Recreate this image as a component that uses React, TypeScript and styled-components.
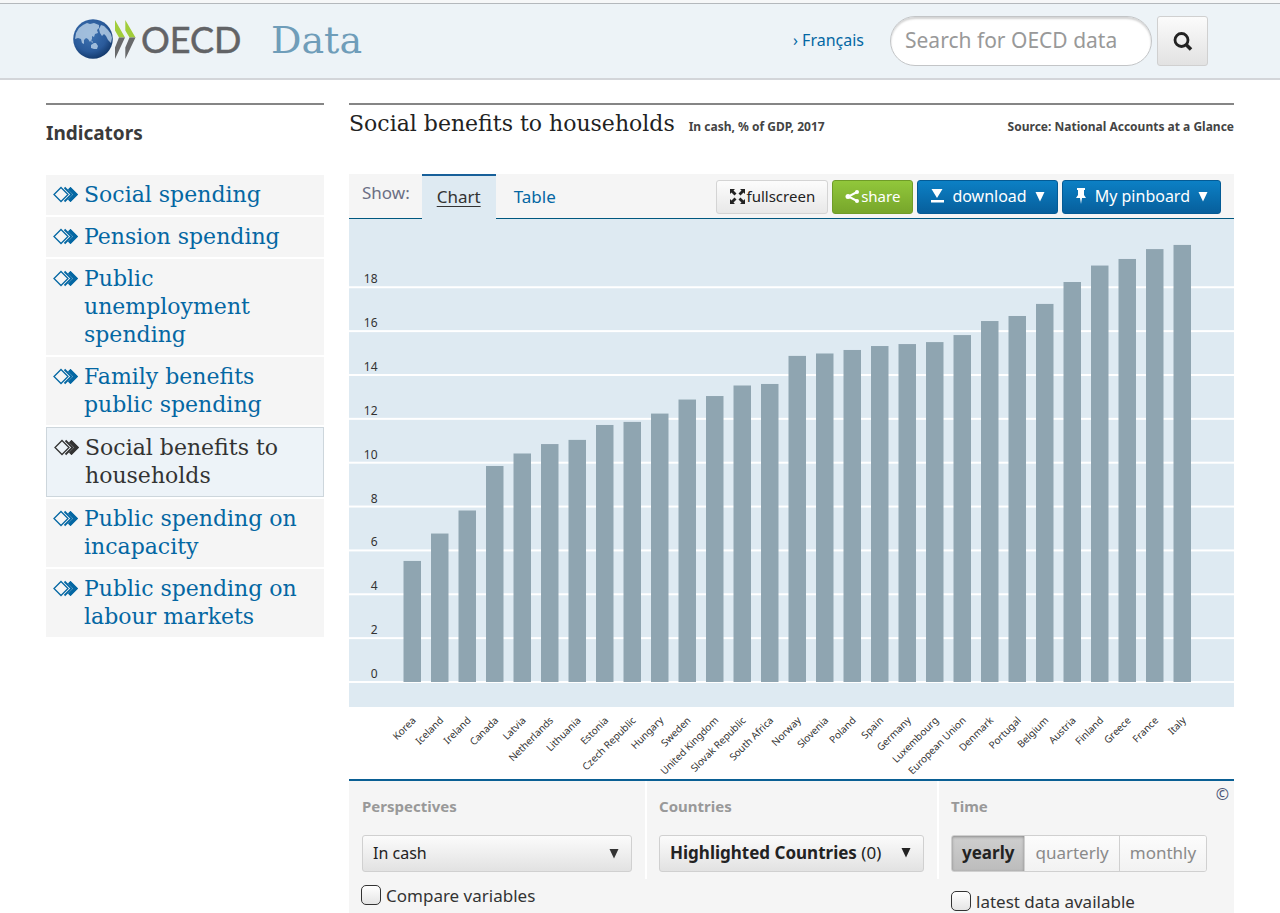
import React from "react";
import styled, { createGlobalStyle, css } from "styled-components";

const sans = `"Noto Sans", "Open Sans", sans-serif`;
const slab = `"DejaVu Serif", serif`;

const blue = "#0467a3";
const paleBlue = "#deeaf2";
const panelGrey = "#f5f5f5";

const GlobalStyle = createGlobalStyle`
  *, *::before, *::after { box-sizing: border-box; }
  body { margin: 0; background: #fff; color: #333; font-family: ${sans}; }
  h1, h2, h3, ul, p { margin: 0; padding: 0; }
  ul { list-style: none; }
  button, input, select { font-family: inherit; margin: 0; }
  a { color: ${blue}; text-decoration: none; }
`;

const Page = styled.div`
  min-height: 100vh;
  display: flex;
  flex-direction: column;
`;

const Header = styled.header`
  border-top: 3px solid #f6f7f8;
  border-bottom: 2px solid #d3d5d9;
  background: #edf3f7;
`;

const HeaderBar = styled.div`
  display: flex;
  align-items: center;
  height: 75px;
  padding: 0 72px;
  border-top: 1px solid #b4b8bc;
`;

const Brand = styled.a`
  display: flex;
  align-items: center;
  svg { display: block; }
`;

const SiteName = styled.span`
  margin-left: 27px;
  padding-bottom: 2px;
  font: 38px/48px ${slab};
  color: #6f9db9;
`;

const Language = styled.a`
  margin-left: auto;
  margin-right: 26px;
  padding-bottom: 2px;
  font-size: 16px;
  line-height: 24px;
`;

const Search = styled.form`
  display: flex;
  gap: 5px;
`;

const SearchInput = styled.input`
  width: 262px;
  height: 50px;
  padding: 0 14px 2px;
  border: 1px solid #c3c5c7;
  border-radius: 25px;
  box-shadow: inset 0 2px 2px #d4d4d4;
  background: #fff;
  font-size: 21px;
  &::placeholder { color: #999; opacity: 1; }
`;

const greyButton = css`
  border: 1px solid #d0d0d0;
  border-radius: 3px;
  background: linear-gradient(#fbfbfb, #e2e2e2);
  color: #222;
`;

const SearchButton = styled.button`
  ${greyButton}
  display: grid;
  place-items: center;
  width: 51px;
  height: 50px;
  padding: 0;
`;

const Body = styled.div`
  flex: 1;
  display: grid;
  grid-template-columns: 278px minmax(0, 1fr);
  gap: 25px;
  padding: 23px 46px 0;
`;

const Sidebar = styled.aside`
  border-top: 2px solid #858585;
`;

const SidebarTitle = styled.h2`
  padding: 14px 0 28px;
  font-size: 19px;
  line-height: 28px;
  color: #3a3a3a;
`;

const IndicatorList = styled.ul`
  display: flex;
  flex-direction: column;
  gap: 2px;
`;

const IndicatorLink = styled.a<{ $active?: boolean }>`
  display: flex;
  gap: 6px;
  padding: 6px 24px 6px 7px;
  border: ${(p) => (p.$active ? "1px solid #cdd6dc" : "0")};
  background: ${(p) => (p.$active ? "#edf3f8" : panelGrey)};
  color: ${(p) => (p.$active ? "#333" : blue)};
  font: 22px/28px ${slab};
  svg { flex: none; margin-top: 5px; }
`;

const Main = styled.main`
  display: flex;
  flex-direction: column;
  border-top: 2px solid #858585;
`;

const TitleRow = styled.div`
  display: flex;
  align-items: baseline;
  gap: 14px;
  height: 69px;
  padding-top: 4px;
`;

const ChartTitle = styled.h1`
  font: 22px/30px ${slab};
  color: #222;
`;

const Caption = styled.p`
  font-size: 12px;
  font-weight: 700;
  line-height: 18px;
  color: #444;
`;

const Source = styled(Caption)`
  margin-left: auto;
`;

const Toolbar = styled.div`
  display: flex;
  align-items: center;
  height: 45px;
  padding: 0 13px;
  border-bottom: 1px solid #00577f;
  background: ${panelGrey};
`;

const ShowLabel = styled.span`
  margin-right: 12px;
  padding-bottom: 6px;
  font-size: 17px;
  line-height: 24px;
  color: #6b6f84;
`;

const Tab = styled.button<{ $active?: boolean }>`
  align-self: stretch;
  margin: 0 0 -1px;
  padding: 0 15px 2px;
  border: 0;
  border-top: 2px solid ${(p) => (p.$active ? "#17609a" : "transparent")};
  background: ${(p) => (p.$active ? paleBlue : "none")};
  color: ${(p) => (p.$active ? "#333" : blue)};
  font-size: 17px;
  text-decoration: ${(p) => (p.$active ? "underline" : "none")};
  text-underline-offset: 3px;
  & + & { padding: 0 18px 2px; }
`;

const Actions = styled.div`
  display: flex;
  gap: 4px;
  margin-left: auto;
  padding-top: 2px;
`;

const tones = {
  grey: css`
    border-color: #d4d4d4;
    background: linear-gradient(#fcfcfc, #e8e8e8);
    color: #222;
    font-size: 15px;
  `,
  green: css`
    border-color: #6f9c28;
    background: linear-gradient(#91c73b, #77a62b);
    color: #fff;
    font-size: 15px;
  `,
  blue: css`
    border-color: #045b95;
    background: linear-gradient(#0c80c5, #075f9c);
    color: #fff;
    font-size: 16px;
  `,
};

const ActionButton = styled.button<{ $tone: keyof typeof tones; $gap?: number }>`
  display: flex;
  align-items: center;
  gap: ${(p) => p.$gap ?? 1}px;
  height: 34px;
  padding: 0 12px 2px;
  border: 1px solid;
  border-radius: 3px;
  white-space: nowrap;
  ${(p) => tones[p.$tone]}
`;

const ChartSvg = styled.svg`
  display: block;
  width: 100%;
  height: auto;
  font-family: ${sans};
`;

const Controls = styled.section`
  position: relative;
  flex: 1;
  display: grid;
  grid-template-columns: 296fr 292fr 297fr;
  grid-template-rows: auto 1fr;
  border-top: 2px solid #0a5f94;
  background: ${panelGrey};
`;

const ControlGroup = styled.div`
  display: flex;
  flex-direction: column;
  align-items: flex-start;
  height: 98px;
  padding: 12px 13px 0 12px;
  border-left: 2px solid #fff;
  &:first-child { border-left: 0; padding-left: 13px; }
`;

const GroupTitle = styled.h3`
  margin-bottom: 16px;
  font-size: 15px;
  font-weight: 700;
  line-height: 26px;
  color: #999;
`;

const SelectBox = styled.div`
  display: grid;
  grid-template-columns: 1fr auto;
  align-items: center;
  width: 100%;
  svg { grid-area: 1 / 2; margin-right: 13px; pointer-events: none; }
`;

const Select = styled.select`
  ${greyButton}
  grid-area: 1 / 1 / 2 / 3;
  height: 37px;
  padding: 0 10px 2px;
  appearance: none;
  font-size: 16px;
`;

const CountryButton = styled.button`
  ${greyButton}
  display: flex;
  align-items: center;
  justify-content: space-between;
  width: 100%;
  height: 37px;
  padding: 0 12px 2px 10px;
  font-size: 17px;
  white-space: nowrap;
`;

const Segments = styled.div`
  display: flex;
  border: 1px solid #d0d0d0;
  border-radius: 3px;
  overflow: hidden;
`;

const Segment = styled.button<{ $active?: boolean }>`
  height: 35px;
  padding: 0 10px 2px;
  border: 0;
  background: ${(p) => (p.$active ? "linear-gradient(#cfcfcf, #bcbcbc)" : "linear-gradient(#fcfcfc, #f2f2f2)")};
  box-shadow: ${(p) => (p.$active ? "inset 0 1px 3px #888" : "none")};
  color: ${(p) => (p.$active ? "#222" : "#8a8a8a")};
  font-size: 17px;
  font-weight: ${(p) => (p.$active ? 700 : 400)};
  & + & { border-left: 1px solid #d0d0d0; }
`;

const CheckLabel = styled.label<{ $column: number }>`
  grid-column: ${(p) => p.$column};
  display: flex;
  align-items: center;
  gap: 5px;
  height: 24px;
  margin: ${(p) => (p.$column === 1 ? "4px 0 0 12px" : "10px 0 0 14px")};
  font-size: 17px;
`;

const Checkbox = styled.input`
  appearance: none;
  width: 20px;
  height: 20px;
  border: 1px solid #333;
  border-radius: 5px;
  background: linear-gradient(#fff, #e4e4e4);
`;

const Copyright = styled.span`
  position: absolute;
  top: 2px;
  right: 5px;
  font-size: 16px;
  line-height: 22px;
  color: #4d5878;
`;

const Logo = () => (
  <svg width="172" height="46" viewBox="0 0 172 46" role="img" aria-label="OECD">
    <defs>
      <radialGradient id="globe" cx="42%" cy="38%" r="62%">
        <stop offset="0" stopColor="#3f74b3" />
        <stop offset="0.7" stopColor="#2a5a9a" />
        <stop offset="1" stopColor="#153c70" />
      </radialGradient>
    </defs>
    <circle cx="21" cy="21" r="19.800" fill="url(#globe)" />
    <path
      d="M4 15 7 10 11 7 15 5 18 6 22 5 27 7 27 10 25 12 26 15 23 16 22 19 20 18 20 21 18 24 16 21 14 20 12 22 12 26 10 25 9 21 6 20 3 21Z M29 7 32 8 36 12 39 16 40 20 39 25 36 22 34 18 32 16 30 18 28 15 27 11Z M19 27 22 25 24 25 26 28 25 31 22 31 19 30Z M19 22 21 24 20 25Z"
      fill="#b3cbe4"
      opacity="0.85"
    />
    <path d="M43 2 53 19.500H47L43 12.500Z M53.300 2 63.500 19.500H57.500L53.300 12.500Z" fill="#a1cd3a" />
    <path d="M47 19.500H53L43 41V29.500Z M57.500 19.500H63.500L53.300 41V29.500Z" fill="#68696b" />
    <text x="69" y="35" fontFamily="Lato, sans-serif" fontSize="36" fill="#626366" stroke="#626366" strokeWidth="0.500">
      OECD
    </text>
  </svg>
);

const IndicatorIcon = ({ active }: { active?: boolean }) => {
  const background = active ? "#edf3f8" : panelGrey;
  return (
    <svg width="25" height="17" viewBox="0 0 25 17" aria-hidden="true">
      <path d="M17.500 1 25 8.500 17.500 16 10 8.500Z" fill="currentColor" />
      <path d="M12.500 2.500 18.500 8.500 12.500 14.500" fill={background} stroke={background} strokeWidth="3" />
      <path d="M11.500 1.500 18.500 8.500 11.500 15.500" fill="none" stroke="currentColor" strokeWidth="1.800" />
      <path d="M8 1.500 15 8.500 8 15.500 1 8.500Z" fill={background} stroke="currentColor" strokeWidth="1.300" />
      <path d="M17.500 1 25 8.500 17.500 16 15 13.500 20 8.500 15 3.500Z" fill="currentColor" />
    </svg>
  );
};

const Caret = () => (
  <svg width="10" height="11" viewBox="0 0 10 11" aria-hidden="true">
    <path d="M0.500 1H9.500L5 10.500Z" fill="currentColor" />
  </svg>
);

const SearchIcon = () => (
  <svg width="20" height="20" viewBox="0 0 20 20" aria-hidden="true">
    <circle cx="8.500" cy="9" r="6.500" fill="none" stroke="#222" strokeWidth="2.800" />
    <path d="M13 13.500 18 18.500" stroke="#222" strokeWidth="3.500" />
  </svg>
);

const FullscreenIcon = () => (
  <svg width="17" height="17" viewBox="0 0 17 17" aria-hidden="true">
    <path
      d="M1 1H6L4.500 2.500 7.500 5.500 5.500 7.500 2.500 4.500 1 6Z M16 1V6L14.500 4.500 11.500 7.500 9.500 5.500 12.500 2.500 11 1Z M1 16V11L2.500 12.500 5.500 9.500 7.500 11.500 4.500 14.500 6 16Z M16 16H11L12.500 14.500 9.500 11.500 11.500 9.500 14.500 12.500 16 11Z"
      fill="currentColor"
    />
  </svg>
);

const ShareIcon = () => (
  <svg width="15" height="15" viewBox="0 0 15 15" aria-hidden="true" fill="currentColor">
    <path d="M12 3 3.500 7.500 12 12" fill="none" stroke="currentColor" strokeWidth="2" />
    <circle cx="12" cy="3" r="2" />
    <circle cx="3" cy="7.500" r="2.500" />
    <circle cx="12" cy="12" r="2" />
  </svg>
);

const DownloadIcon = () => (
  <svg width="14" height="14" viewBox="0 0 14 14" aria-hidden="true" fill="currentColor">
    <path d="M1.500 0H12.500L7 9Z M1 11H14V13.500H1Z" />
  </svg>
);

const PinIcon = () => (
  <svg width="12" height="16" viewBox="0 0 12 16" aria-hidden="true" fill="currentColor">
    <path d="M2 0H10V2H9V7L11 10H7L6 16 5 10H1L3 7V2H2Z" />
  </svg>
);

const indicators = [
  "Social spending",
  "Pension spending",
  "Public unemployment spending",
  "Family benefits public spending",
  "Social benefits to households",
  "Public spending on incapacity",
  "Public spending on labour markets",
];

const data: [string, number][] = [
  ["Korea", 5.52], ["Iceland", 6.77], ["Ireland", 7.82], ["Canada", 9.85], ["Latvia", 10.42],
  ["Netherlands", 10.85], ["Lithuania", 11.04], ["Estonia", 11.72], ["Czech Republic", 11.86],
  ["Hungary", 12.24], ["Sweden", 12.88], ["United Kingdom", 13.04], ["Slovak Republic", 13.52],
  ["South Africa", 13.59], ["Norway", 14.87], ["Slovenia", 14.98], ["Poland", 15.14],
  ["Spain", 15.32], ["Germany", 15.41], ["Luxembourg", 15.5], ["European Union", 15.82],
  ["Denmark", 16.46], ["Portugal", 16.69], ["Belgium", 17.24], ["Austria", 18.24],
  ["Finland", 18.99], ["Greece", 19.29], ["France", 19.74], ["Italy", 19.93],
];

const BASELINE = 463;
const UNIT = 21.93;
const FIRST_BAR = 54.5;
const PITCH = 27.5;

const BarChart = () => (
  <ChartSvg viewBox="0 0 885 560" role="img" aria-label="Social benefits to households by country">
    <rect width="885" height="488" fill={paleBlue} />
    {[0, 2, 4, 6, 8, 10, 12, 14, 16, 18].map((tick) => {
      const y = BASELINE - tick * UNIT;
      return (
        <g key={tick}>
          <rect y={y - 1} width="885" height="2" fill="#fff" />
          <text x="28.500" y={y - 4} textAnchor="end" fontSize="12" fill="#333">
            {tick}
          </text>
        </g>
      );
    })}
    {data.map(([name, value], i) => {
      const x = FIRST_BAR + i * PITCH;
      return (
        <g key={name}>
          <rect x={x} y={BASELINE - value * UNIT} width="17.500" height={value * UNIT} fill="#8fa5b1" />
          <text transform={`translate(${x + 13} 502) rotate(-45)`} textAnchor="end" fontSize="10" fill="#333">
            {name}
          </text>
        </g>
      );
    })}
  </ChartSvg>
);

export default function App() {
  return (
    <Page>
      <GlobalStyle />
      <Header>
        <HeaderBar>
          <Brand href="#">
            <Logo />
            <SiteName>Data</SiteName>
          </Brand>
          <Language href="#">› Français</Language>
          <Search onSubmit={(e) => e.preventDefault()}>
            <SearchInput type="text" placeholder="Search for OECD data" aria-label="Search for OECD data" />
            <SearchButton type="submit" aria-label="Search">
              <SearchIcon />
            </SearchButton>
          </Search>
        </HeaderBar>
      </Header>
      <Body>
        <Sidebar>
          <SidebarTitle>Indicators</SidebarTitle>
          <IndicatorList>
            {indicators.map((name, i) => (
              <li key={name}>
                <IndicatorLink href="#" $active={i === 4}>
                  <IndicatorIcon active={i === 4} />
                  <span>{name}</span>
                </IndicatorLink>
              </li>
            ))}
          </IndicatorList>
        </Sidebar>
        <Main>
          <TitleRow>
            <ChartTitle>Social benefits to households</ChartTitle>
            <Caption>In cash, % of GDP, 2017</Caption>
            <Source>Source: National Accounts at a Glance</Source>
          </TitleRow>
          <Toolbar>
            <ShowLabel>Show:</ShowLabel>
            <Tab $active>Chart</Tab>
            <Tab>Table</Tab>
            <Actions>
              <ActionButton $tone="grey"><FullscreenIcon />fullscreen</ActionButton>
              <ActionButton $tone="green"><ShareIcon />share</ActionButton>
              <ActionButton $tone="blue" $gap={8}><DownloadIcon />download<Caret /></ActionButton>
              <ActionButton $tone="blue" $gap={8}><PinIcon />My pinboard<Caret /></ActionButton>
            </Actions>
          </Toolbar>
          <BarChart />
          <Controls>
            <ControlGroup>
              <GroupTitle as="label" htmlFor="perspective">Perspectives</GroupTitle>
              <SelectBox>
                <Select id="perspective" defaultValue="cash">
                  <option value="cash">In cash</option>
                </Select>
                <Caret />
              </SelectBox>
            </ControlGroup>
            <ControlGroup>
              <GroupTitle>Countries</GroupTitle>
              <CountryButton>
                <span><b>Highlighted Countries</b> (0)</span>
                <Caret />
              </CountryButton>
            </ControlGroup>
            <ControlGroup>
              <GroupTitle>Time</GroupTitle>
              <Segments>
                <Segment $active>yearly</Segment>
                <Segment>quarterly</Segment>
                <Segment>monthly</Segment>
              </Segments>
            </ControlGroup>
            <CheckLabel $column={1}><Checkbox type="checkbox" />Compare variables</CheckLabel>
            <CheckLabel $column={3}><Checkbox type="checkbox" />latest data available</CheckLabel>
            <Copyright>©</Copyright>
          </Controls>
        </Main>
      </Body>
    </Page>
  );
}
